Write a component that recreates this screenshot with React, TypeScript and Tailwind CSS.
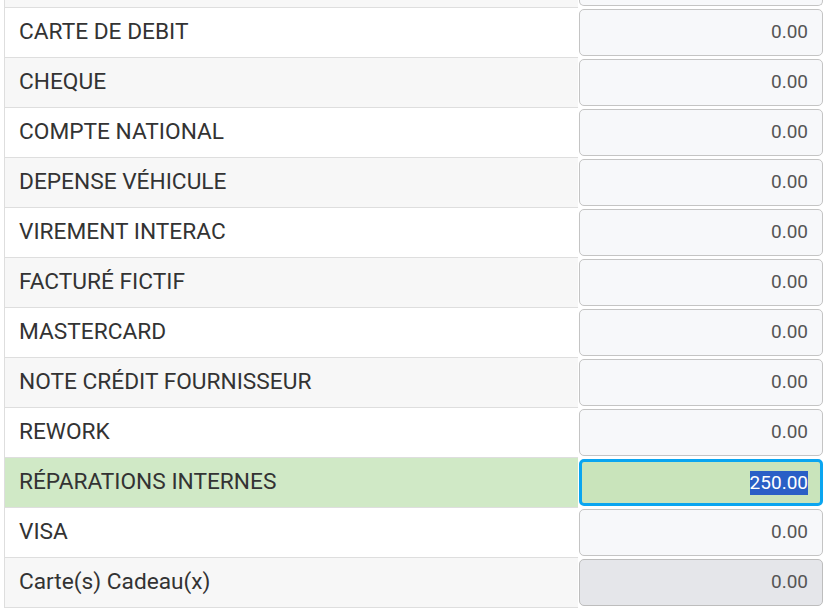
const ROWS: { label: string; value: string; active?: boolean; disabled?: boolean }[] = [
  { label: 'CARTE DE DEBIT', value: '0.00' },
  { label: 'CHEQUE', value: '0.00' },
  { label: 'COMPTE NATIONAL', value: '0.00' },
  { label: 'DEPENSE VÉHICULE', value: '0.00' },
  { label: 'VIREMENT INTERAC', value: '0.00' },
  { label: 'FACTURÉ FICTIF', value: '0.00' },
  { label: 'MASTERCARD', value: '0.00' },
  { label: 'NOTE CRÉDIT FOURNISSEUR', value: '0.00' },
  { label: 'REWORK', value: '0.00' },
  { label: 'RÉPARATIONS INTERNES', value: '250.00', active: true },
  { label: 'VISA', value: '0.00' },
  { label: 'Carte(s) Cadeau(x)', value: '0.00', disabled: true },
];

function PaymentRow({ label, value, active, disabled, index }: (typeof ROWS)[number] & { index: number }) {
  const striped = index % 2 === 1;
  const rowBg = active ? 'bg-[#d0e9c6]' : striped ? 'bg-[#f7f7f7]' : 'bg-white';

  let inputCls = 'border border-[#c4c4c4] bg-[#f7f8fa] text-[#555] pr-[14px]';
  if (active) inputCls = 'border-[3px] border-[#0aa5f0] bg-[#c9e4bb] text-white pr-[12px]';
  if (disabled) inputCls = 'border border-[#bdbdbd] bg-[#e5e6ea] text-[#555] pr-[14px]';

  return (
    <div className="flex h-[50px]">
      <div
        className={`flex-1 flex items-center pl-[14px] border-l border-b border-[#dedede] text-[22.7px] text-[#333] ${rowBg}`}
      >
        {label}
      </div>
      <div className="w-[252px] pl-[1px] pr-[7px] pt-[1px] bg-white">
        <div className={`h-[47px] rounded-[5px] flex items-center justify-end text-[19px] ${inputCls}`}>
          {active ? <span className="bg-[#2a5fc6] leading-[24px]">{value}</span> : value}
        </div>
      </div>
    </div>
  );
}

export default function App() {
  return (
    <div
      className="w-[830px] h-[609px] overflow-hidden bg-white"
      style={{ fontFamily: 'Roboto, "Liberation Sans", sans-serif' }}
    >
      <div className="pl-[4px]">
        {/* rangée précédente, coupée par le défilement */}
        <div className="flex h-[8px]">
          <div className="flex-1 border-l border-b border-[#dedede] bg-[#f7f7f7]" />
          <div className="w-[252px] pl-[1px] pr-[7px] bg-white">
            <div className="h-[6px] rounded-b-[5px] border-x border-b border-[#c4c4c4] bg-[#f7f8fa]" />
          </div>
        </div>
        {ROWS.map((r, i) => (
          <PaymentRow key={r.label} {...r} index={i} />
        ))}
      </div>
    </div>
  );
}
